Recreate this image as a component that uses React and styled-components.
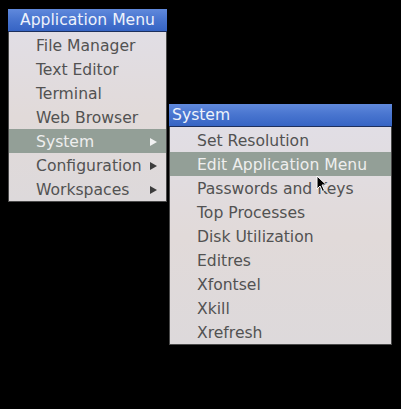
import React from "react";
import styled, { createGlobalStyle } from "styled-components";

const Global = createGlobalStyle`
  html, body { margin: 0; padding: 0; background: #000; }
  body { width: 401px; height: 409px; overflow: hidden; font-family: "DejaVu Sans", sans-serif; }
`;

const Desktop = styled.div`
  position: relative;
  width: 401px;
  height: 409px;
  background: #000;
  padding: 9px 0 0 8px;
  box-sizing: border-box;
`;

const Menu = styled.div`
  width: ${(p) => p.$width}px;
  display: flex;
  flex-direction: column;
  box-sizing: border-box;
`;

const FloatingMenu = styled(Menu)`
  position: absolute;
  left: ${(p) => p.$left}px;
  top: ${(p) => p.$top}px;
`;

const Title = styled.div`
  height: 23px;
  box-sizing: border-box;
  display: flex;
  align-items: center;
  justify-content: ${(p) => (p.$center ? "center" : "flex-start")};
  padding: 1px 0 0 ${(p) => (p.$center ? 0 : 3)}px;
  background: linear-gradient(#6089dc 0%, #4a76d0 45%, #3664c4 100%);
  border-bottom: 1px solid #1d2f5c;
  color: #eef2fb;
  font-size: 15.6px;
  line-height: 1;
`;

const Body = styled.div`
  background: linear-gradient(#e1dee5 0%, #e1dad9 50%, #ddd9db 100%);
  border: 1px solid #4a4a4a;
  border-top: none;
  padding-top: 1px;
  display: flex;
  flex-direction: column;
`;

const Item = styled.div`
  height: 24px;
  box-sizing: border-box;
  display: flex;
  align-items: center;
  justify-content: space-between;
  padding: 2px 9px 0 27px;
  font-size: 15.6px;
  color: ${(p) => (p.$active ? "#eeeeee" : "#525252")};
  background: ${(p) => (p.$active ? "#939f97" : "transparent")};
  white-space: nowrap;
`;

const Arrow = styled.span`
  width: 0;
  height: 0;
  margin-top: -1px;
  border-top: 4px solid transparent;
  border-bottom: 4px solid transparent;
  border-left: 7px solid ${(p) => (p.$active ? "#f2f2f2" : "#3c3c3c")};
`;

const Cursor = styled.svg`
  position: absolute;
  left: 316px;
  top: 175px;
`;

const mainItems = [
  { label: "File Manager" },
  { label: "Text Editor" },
  { label: "Terminal" },
  { label: "Web Browser" },
  { label: "System", sub: true, active: true },
  { label: "Configuration", sub: true },
  { label: "Workspaces", sub: true },
];

const systemItems = [
  "Set Resolution",
  "Edit Application Menu",
  "Passwords and Keys",
  "Top Processes",
  "Disk Utilization",
  "Editres",
  "Xfontsel",
  "Xkill",
  "Xrefresh",
];

export default function App() {
  return (
    <>
      <Global />
      <Desktop>
        <Menu $width={159}>
          <Title $center>Application Menu</Title>
          <Body>
            {mainItems.map((it) => (
              <Item key={it.label} $active={it.active}>
                <span>{it.label}</span>
                {it.sub && <Arrow $active={it.active} />}
              </Item>
            ))}
          </Body>
        </Menu>
        <FloatingMenu $width={223} $left={169} $top={104}>
          <Title>System</Title>
          <Body>
            {systemItems.map((label) => (
              <Item key={label} $active={label === "Edit Application Menu"}>
                <span>{label}</span>
              </Item>
            ))}
          </Body>
        </FloatingMenu>
        <Cursor width="12" height="18" viewBox="0 0 12 18">
          <path
            d="M1 1 L1 14 L4 11 L6.5 16.5 L8.5 15.5 L6 10 L10.5 10 Z"
            fill="#000"
            stroke="#fff"
            strokeWidth="1"
            strokeLinejoin="round"
          />
        </Cursor>
      </Desktop>
    </>
  );
}
